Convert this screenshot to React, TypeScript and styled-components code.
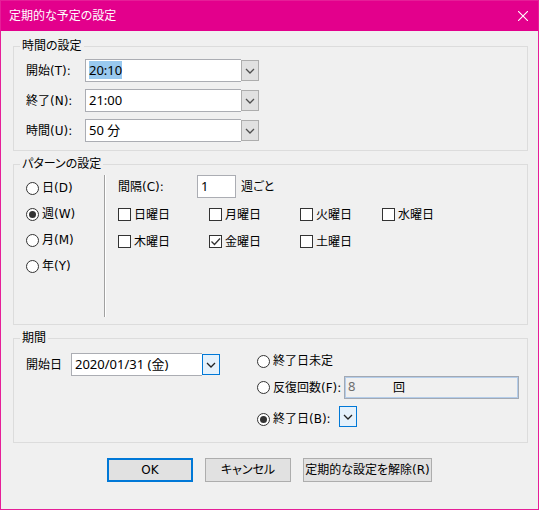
import React, { useEffect, useId, useRef } from "react";
import styled, { createGlobalStyle, css } from "styled-components";

const GlobalStyle = createGlobalStyle`
  *, *::before, *::after { box-sizing: border-box; }
  body {
    margin: 0;
    background: #f0f0f0;
    color: #000;
    font: 12px/16px "DejaVu Sans", "Noto Sans CJK JP", sans-serif;
    font-feature-settings: "palt";
  }
  input, button { font: inherit; color: inherit; font-feature-settings: inherit; }
`;

const Dialog = styled.main`
  display: flex;
  flex-direction: column;
  min-height: 100vh;
  border: 1px solid #e61e98;
  background: #f0f0f0;
`;

const TitleBar = styled.header`
  display: flex;
  align-items: center;
  justify-content: space-between;
  height: 30px;
  padding-left: 8px;
  background: #e3008c;
  color: #fff;
`;

const Title = styled.h1`
  margin: 0;
  font-size: 12px;
  font-weight: 400;
`;

const CloseButton = styled.button`
  display: grid;
  place-items: center;
  width: 30px;
  height: 30px;
  padding: 0;
  border: 0;
  background: none;
`;

const Form = styled.form`
  display: flex;
  flex-direction: column;
  gap: 5px;
  padding: 7px 10px 16px 12px;
`;

const Group = styled.fieldset`
  min-width: 0;
  margin: 0;
  padding: 0 6px;
  border: 1px solid #dcdcdc;
`;

const Legend = styled.legend`
  padding: 0 2px;
`;

const TimeRows = styled.div`
  display: flex;
  flex-direction: column;
  gap: 7px;
  padding: 5px 6px 8px;
`;

const FieldRow = styled.div<{ $label: number }>`
  display: grid;
  grid-template-columns: ${(p) => p.$label}px auto;
  justify-content: start;
  align-items: center;
`;

const Combo = styled.div`
  display: flex;
  align-items: center;
`;

const TextInput = styled.input<{ $width: number; $joined?: boolean }>`
  width: ${(p) => p.$width}px;
  height: 23px;
  padding: 0 3px 2px;
  border: 1px solid #abadb3;
  ${(p) => p.$joined && css`border-right: 0;`}
  border-radius: 0;
  outline: 0;
  background: #fff;
  font-family: "Noto Sans", "Noto Sans CJK JP", sans-serif;
  font-size: 13px;

  &::selection { background: #99c9ef; color: #000; }
`;

const DropButton = styled.button<{ $active?: boolean }>`
  display: grid;
  place-items: center;
  width: 18px;
  height: 21px;
  padding: 0;
  border: 1px solid ${(p) => (p.$active ? "#0078d7" : "#adadad")};
  background: ${(p) => (p.$active ? "#e5f1fb" : "#e1e1e1")};
  color: ${(p) => (p.$active ? "#222" : "#505050")};
`;

const PatternBody = styled.div`
  display: flex;
  min-height: 152px;
  padding: 3px 6px 7px;
`;

const Units = styled.div`
  display: grid;
  grid-auto-rows: 26px;
  align-content: start;
  width: 79px;
  border-right: 1px solid #a0a0a0;
`;

const Schedule = styled.div`
  display: flex;
  flex-direction: column;
  gap: 3px;
  padding-left: 12px;
  border-left: 1px solid #fff;
`;

const Interval = styled.div`
  display: flex;
  align-items: center;
`;

const IntervalLabel = styled.label`
  width: 79px;
`;

const IntervalUnit = styled.span`
  padding-left: 5px;
`;

const Days = styled.div`
  display: grid;
  grid-template-columns: 91px 91px 82px auto;
  grid-auto-rows: 27px;
`;

const OptionLabel = styled.label`
  display: flex;
  align-items: center;
  gap: 3px;
  white-space: nowrap;
`;

const Radio = styled.input`
  appearance: none;
  display: grid;
  place-items: center;
  flex: none;
  width: 13px;
  height: 13px;
  margin: 0;
  border: 1px solid #333;
  border-radius: 50%;
  background: #fff;

  &:checked::before {
    content: "";
    width: 7px;
    height: 7px;
    border-radius: 50%;
    background: #333;
  }
`;

const CheckSlot = styled.span`
  display: grid;
  place-items: center;

  > * { grid-area: 1 / 1; }
  svg { pointer-events: none; }
`;

const Checkbox = styled.input`
  appearance: none;
  width: 13px;
  height: 13px;
  margin: 0;
  border: 1px solid #333;
  background: #fff;

  &:not(:checked) + svg { visibility: hidden; }
`;

const PeriodBody = styled.div`
  display: grid;
  grid-template-columns: 194px 1fr;
  column-gap: 37px;
  align-items: start;
  padding: 7px 2px 15px 6px;
`;

const EndOptions = styled.div`
  display: flex;
  flex-direction: column;
  gap: 7px;
`;

const EndRow = styled.div<{ $align?: string }>`
  display: flex;
  align-items: ${(p) => p.$align ?? "center"};
`;

const EndLabel = styled(OptionLabel)`
  flex: none;
  width: 82px;
`;

const CountBox = styled.div`
  display: flex;
  align-items: center;
  flex: 1;
  min-width: 0;
  height: 23px;
  margin-left: 5px;
  border: 1px solid #a3a9b3;
  box-shadow: inset 0 0 0 1px #b4cdea;
`;

const CountInput = styled.input`
  width: 48px;
  height: 21px;
  padding: 0 3px 3px;
  border: 0;
  background: transparent;
  font-family: "Noto Sans", "Noto Sans CJK JP", sans-serif;
  font-size: 13px;

  &:disabled { color: #6d6d6d; }
`;

const Actions = styled.div`
  display: flex;
  justify-content: center;
  gap: 12px;
  padding: 10px 2px 0 0;
`;

const ActionButton = styled.button<{ $primary?: boolean }>`
  min-width: 86px;
  height: 24px;
  padding: 0 1px;
  border: ${(p) => (p.$primary ? "2px solid #0078d7" : "1px solid #adadad")};
  background: #e1e1e1;
  line-height: 16px;
  white-space: nowrap;
`;

const WideButton = styled(ActionButton)`
  min-width: 129px;
`;

function Chevron() {
  return (
    <svg width="10" height="6" viewBox="0 0 10 6" fill="none" stroke="currentColor" strokeWidth="1.3" aria-hidden="true">
      <path d="M1 1l4 4 4-4" />
    </svg>
  );
}

function TimeField({ label, value, selected }: { label: string; value: string; selected?: boolean }) {
  const id = useId();
  const ref = useRef<HTMLInputElement>(null);
  useEffect(() => {
    if (selected && ref.current) {
      ref.current.focus();
      ref.current.select();
    }
  }, [selected]);
  return (
    <FieldRow $label={59}>
      <label htmlFor={id}>{label}</label>
      <Combo>
        <TextInput id={id} ref={ref} $width={156} $joined defaultValue={value} />
        <DropButton type="button" aria-label={label}>
          <Chevron />
        </DropButton>
      </Combo>
    </FieldRow>
  );
}

const units = ["日(D)", "週(W)", "月(M)", "年(Y)"];
const days = ["日曜日", "月曜日", "火曜日", "水曜日", "木曜日", "金曜日", "土曜日"];

export default function App() {
  return (
    <>
      <GlobalStyle />
      <Dialog>
        <TitleBar>
          <Title>定期的な予定の設定</Title>
          <CloseButton type="button" aria-label="閉じる">
            <svg width="10" height="10" viewBox="0 0 10 10" fill="none" stroke="#fff" strokeWidth="1.1" aria-hidden="true">
              <path d="M0 0l10 10M10 0L0 10" />
            </svg>
          </CloseButton>
        </TitleBar>
        <Form onSubmit={(e) => e.preventDefault()}>
          <Group>
            <Legend>時間の設定</Legend>
            <TimeRows>
              <TimeField label="開始(T):" value="20:10" selected />
              <TimeField label="終了(N):" value="21:00" />
              <TimeField label="時間(U):" value="50 分" />
            </TimeRows>
          </Group>

          <Group>
            <Legend>パターンの設定</Legend>
            <PatternBody>
              <Units>
                {units.map((unit) => (
                  <OptionLabel key={unit}>
                    <Radio type="radio" name="unit" defaultChecked={unit === "週(W)"} />
                    {unit}
                  </OptionLabel>
                ))}
              </Units>
              <Schedule>
                <Interval>
                  <IntervalLabel htmlFor="interval">間隔(C):</IntervalLabel>
                  <TextInput id="interval" $width={39} defaultValue="1" />
                  <IntervalUnit>週ごと</IntervalUnit>
                </Interval>
                <Days>
                  {days.map((day) => (
                    <OptionLabel key={day}>
                      <CheckSlot>
                        <Checkbox type="checkbox" defaultChecked={day === "金曜日"} />
                        <svg width="13" height="13" viewBox="0 0 13 13" fill="none" stroke="#333" strokeWidth="1.3" aria-hidden="true">
                          <path d="M2.500 6.500l3 3 5.500-6" />
                        </svg>
                      </CheckSlot>
                      {day}
                    </OptionLabel>
                  ))}
                </Days>
              </Schedule>
            </PatternBody>
          </Group>

          <Group>
            <Legend>期間</Legend>
            <PeriodBody>
              <FieldRow $label={45}>
                <label htmlFor="start-date">開始日</label>
                <Combo>
                  <TextInput id="start-date" $width={131} $joined defaultValue="2020/01/31 (金)" />
                  <DropButton type="button" $active aria-label="開始日">
                    <Chevron />
                  </DropButton>
                </Combo>
              </FieldRow>
              <EndOptions>
                <EndRow>
                  <EndLabel>
                    <Radio type="radio" name="end" />
                    終了日未定
                  </EndLabel>
                </EndRow>
                <EndRow>
                  <EndLabel>
                    <Radio type="radio" name="end" />
                    反復回数(F):
                  </EndLabel>
                  <CountBox>
                    <CountInput aria-label="反復回数" defaultValue="8" disabled />
                    <span>回</span>
                  </CountBox>
                </EndRow>
                <EndRow $align="end">
                  <EndLabel>
                    <Radio type="radio" name="end" defaultChecked />
                    終了日(B):
                  </EndLabel>
                  <DropButton type="button" $active aria-label="終了日">
                    <Chevron />
                  </DropButton>
                </EndRow>
              </EndOptions>
            </PeriodBody>
          </Group>

          <Actions>
            <ActionButton type="submit" $primary>OK</ActionButton>
            <ActionButton type="button">キャンセル</ActionButton>
            <WideButton type="button">定期的な設定を解除(R)</WideButton>
          </Actions>
        </Form>
      </Dialog>
    </>
  );
}
